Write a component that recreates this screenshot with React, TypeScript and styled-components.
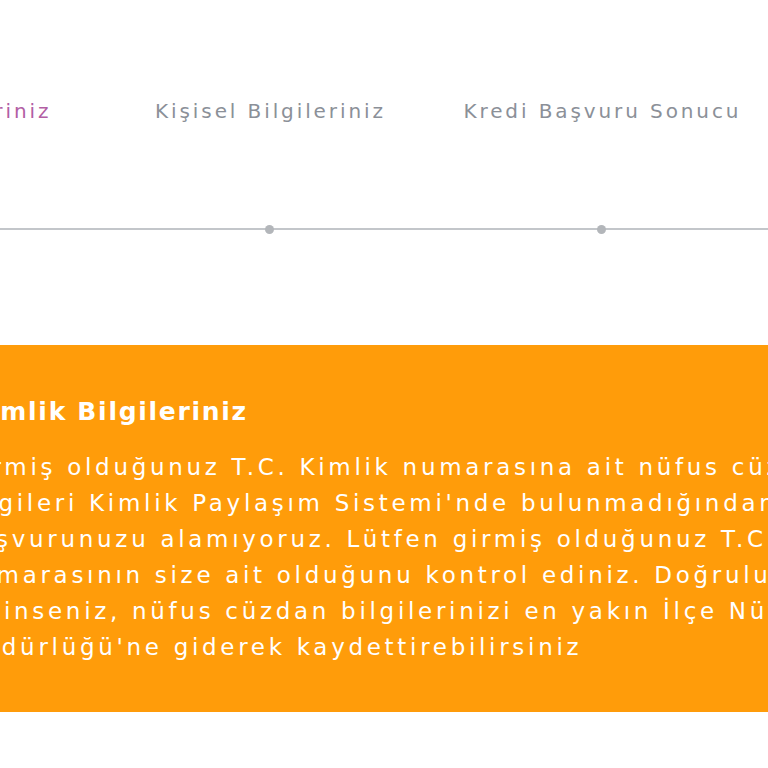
import React from "react";
import styled, { createGlobalStyle } from "styled-components";

const GlobalStyle = createGlobalStyle`
  html, body {
    margin: 0;
    padding: 0;
    background: #ffffff;
  }
  body {
    font-family: "DejaVu Sans", "Open Sans", sans-serif;
    overflow: hidden;
  }
`;

interface Step {
  label: string;
  active?: boolean;
}

const steps: Step[] = [
  { label: "Kimlik Bilgileriniz", active: true },
  { label: "Kişisel Bilgileriniz" },
  { label: "Kredi Başvuru Sonucu" },
  { label: "Onay" },
];

const lines = [
  "Girmiş olduğunuz T.C. Kimlik numarasına ait nüfus cüzdanı",
  "bilgileri Kimlik Paylaşım Sistemi'nde bulunmadığından",
  "başvurunuzu alamıyoruz. Lütfen girmiş olduğunuz T.C. Kimlik",
  "numarasının size ait olduğunu kontrol ediniz. Doğruluğundan",
  "eminseniz, nüfus cüzdan bilgilerinizi en yakın İlçe Nüfus",
  "Müdürlüğü'ne giderek kaydettirebilirsiniz",
];

export default function App() {
  return (
    <>
      <GlobalStyle />
      <Viewport>
        <Stepper>
          <Labels>
            {steps.map((s) => (
              <Label key={s.label} $active={s.active}>
                {s.label}
              </Label>
            ))}
          </Labels>
          <Track>
            {steps.map((s) => (
              <DotCell key={s.label}>
                <Dot />
              </DotCell>
            ))}
          </Track>
        </Stepper>
        <Alert>
          <AlertTitle>Kimlik Bilgileriniz</AlertTitle>
          <AlertText>
            {lines.map((l) => (
              <Line key={l}>{l}</Line>
            ))}
          </AlertText>
        </Alert>
      </Viewport>
    </>
  );
}

const Viewport = styled.div`
  width: 768px;
  height: 768px;
  overflow: hidden;
  position: relative;
`;

const Stepper = styled.div`
  margin-left: -229px;
  padding-top: 96px;
  width: 1328px;
`;

const Labels = styled.div`
  display: grid;
  grid-template-columns: repeat(4, 332px);
`;

const Label = styled.div<{ $active?: boolean }>`
  text-align: center;
  font-size: 20px;
  line-height: 30px;
  letter-spacing: 2.9px;
  text-indent: 2.9px;
  color: ${(p) => (p.$active ? "#b25ea4" : "#8b9098")};
  white-space: nowrap;
`;

const Track = styled.div`
  margin-top: 98px;
  height: 10px;
  display: grid;
  grid-template-columns: repeat(4, 332px);
  background: linear-gradient(
    to bottom,
    transparent 4px,
    #c3c6ca 4px,
    #c3c6ca 6px,
    transparent 6px
  );
`;

const DotCell = styled.div`
  display: flex;
  justify-content: center;
  align-items: center;
`;

const Dot = styled.span`
  width: 9px;
  height: 9px;
  border-radius: 50%;
  background: #b3b6ba;
`;

const Alert = styled.div`
  margin: 111px -100px 0 -100px;
  padding: 50px 100px 47px 60px;
  background: #ff9c0a;
  color: #ffffff;
`;

const AlertTitle = styled.h3`
  margin: 0 0 0 9px;
  font-size: 25px;
  line-height: 34px;
  font-weight: 700;
  letter-spacing: 1.7px;
`;

const AlertText = styled.div`
  margin-top: 20px;
  font-size: 23px;
  line-height: 36px;
  letter-spacing: 3.7px;
`;

const Line = styled.div`
  white-space: nowrap;
`;
